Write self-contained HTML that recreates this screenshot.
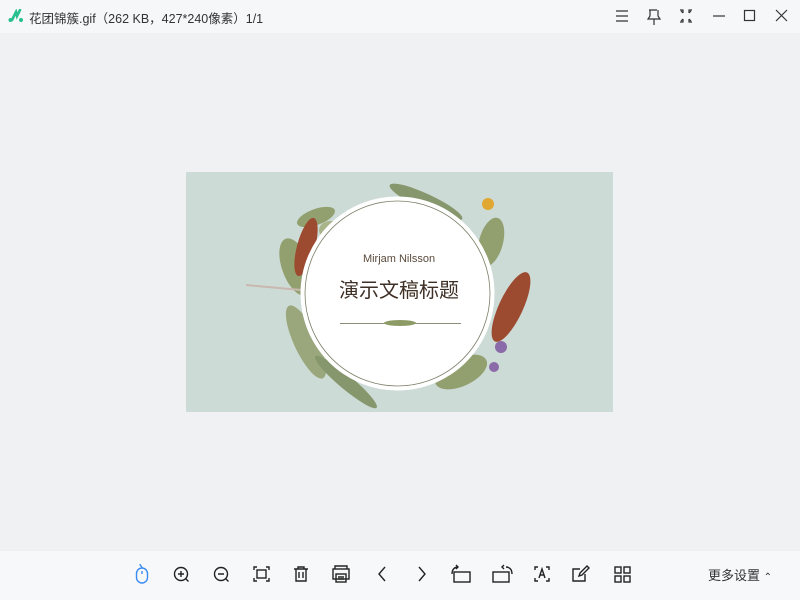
<!DOCTYPE html>
<html><head><meta charset="utf-8"><style>
*{margin:0;padding:0;box-sizing:border-box}
body{width:800px;height:600px;background:#f0f1f3;font-family:"Liberation Sans","Noto Sans CJK SC",sans-serif;position:relative;overflow:hidden}
.top{position:absolute;left:0;top:0;width:800px;height:33px;background:#f6f7f9}
.title{position:absolute;left:29px;top:8px;font-size:12.5px;color:#333}
.bot{position:absolute;left:0;top:550px;width:800px;height:50px;background:#f7f8fa;border-top:1px solid #eceef0}
.more{position:absolute;left:708px;top:565px;font-size:13px;color:#333}
svg{position:absolute}
</style></head><body>
<div class="top"></div>
<svg style="left:8px;top:9px" width="16" height="14" viewBox="0 0 16 14"><circle cx="2.5" cy="11" r="2" fill="#28c08c"/><path d="M4 11 L8 3 L9 7 L12 1" stroke="#28c08c" stroke-width="2.6" fill="none" stroke-linecap="round"/><circle cx="13" cy="11" r="2" fill="#28c08c"/></svg>
<div class="title">花团锦簇.gif（262 KB，427*240像素）1/1</div>
<svg style="left:610px;top:6px" width="190" height="22" viewBox="0 0 190 22" fill="none" stroke="#333" stroke-width="1.2">
<path d="M6 5h12M6 10h12M6 15h12"/>
<path d="M39 4h8M40 4v6l-2 3h12l-2-3V4M44 13v6"/>
<path d="M70 4h3v3M82 4h-3v3M70 16h3v-3M82 16h-3v-3M71 5l2 2M81 5l-2 2M71 15l2-2M81 15l-2-2"/>
<path d="M103 10h12"/>
<rect x="134.5" y="4.5" width="10" height="10"/>
<path d="M166 4l11 11M177 4l-11 11"/>
</svg>
<div style="position:absolute;left:186px;top:172px;width:427px;height:240px;background:#cddbd6;overflow:hidden">
<svg width="427" height="240" viewBox="0 0 427 240">
<g fill="#8c9a66" opacity=".9">
<ellipse cx="110" cy="95" rx="14" ry="30" transform="rotate(-20 110 95)"/>
<ellipse cx="120" cy="170" rx="12" ry="40" transform="rotate(-25 120 170)" fill="#95a173"/>
<ellipse cx="275" cy="200" rx="28" ry="14" transform="rotate(-25 275 200)"/>
<ellipse cx="305" cy="70" rx="12" ry="25" transform="rotate(15 305 70)"/>
<ellipse cx="240" cy="30" rx="40" ry="8" transform="rotate(25 240 30)" fill="#7f8f62"/>
<ellipse cx="160" cy="210" rx="40" ry="7" transform="rotate(40 160 210)" fill="#7f8f62"/>
<ellipse cx="130" cy="45" rx="20" ry="8" transform="rotate(-20 130 45)"/>
<ellipse cx="145" cy="58" rx="12" ry="9" fill="#a6b083"/>
</g>
<ellipse cx="120" cy="75" rx="9" ry="30" transform="rotate(15 120 75)" fill="#9c4a30"/>
<ellipse cx="325" cy="135" rx="12" ry="38" transform="rotate(25 325 135)" fill="#9c4a30"/>
<circle cx="302" cy="32" r="6" fill="#e0a830"/>
<circle cx="315" cy="175" r="6" fill="#8a6aa8"/>
<circle cx="308" cy="195" r="5" fill="#8a6aa8"/>
<path d="M60 113 L115 118" stroke="#c9b8b0" stroke-width="2"/>
<circle cx="211.5" cy="121.5" r="97" fill="#fff"/>
<circle cx="211.5" cy="121.5" r="92.5" fill="none" stroke="#7d7f6a" stroke-width=".8"/>
<path d="M154 151.5H275" stroke="#8c8e7a" stroke-width="1"/>
<ellipse cx="214" cy="151" rx="16" ry="3" fill="#8c9a66"/>
<text x="213" y="90" text-anchor="middle" font-size="11" fill="#5a4a3c" font-family="Liberation Sans,sans-serif">Mirjam Nilsson</text>
<text x="213" y="125" text-anchor="middle" font-size="20" fill="#3e3026" font-family="Noto Sans CJK SC,sans-serif">演示文稿标题</text>
</svg></div>
<div class="bot"></div>
<svg style="left:130px;top:562px" width="520" height="26" viewBox="0 0 520 26" fill="none" stroke="#222" stroke-width="1.4">
<g stroke="#3b8cf0"><rect x="6.5" y="6" width="11" height="15" rx="5.5"/><path d="M12 9v3M12 6c0-2 -2-2 -2-4"/></g>
<circle cx="51" cy="12" r="6.5"/><path d="M55.5 16.5l3 3M48 12h6M51 9v6"/>
<circle cx="91" cy="12" r="6.5"/><path d="M95.5 16.5l3 3M88 12h6"/>
<path d="M124 8V5h3M136 5h3v3M124 16v3h3M136 19h3v-3"/><rect x="127" y="8" width="9" height="8"/>
<path d="M164 7h14M168 7V5h6v2M166 7v12h10V7M169 10v6M173 10v6"/>
<rect x="203" y="7" width="16" height="10"/><rect x="206" y="12" width="10" height="8"/><path d="M205 7V4h12v3M208 15h6M208 17h6"/>
<path d="M255 5l-6 7 6 7"/>
<path d="M289 5l6 7-6 7"/>
<rect x="324" y="10" width="16" height="10"/><path d="M322 12c0-5 3-7 6-7M326 3l2 2-2 2"/>
<rect x="363" y="10" width="16" height="10"/><path d="M382 12c0-5-3-7-6-7M374 3l-2 2 2 2"/>
<path d="M405 8V5h3M416 5h3v3M405 16v3h3M416 19h3v-3M409 16l3-9 3 9M410 13h4"/>
<path d="M455 12v7h-12V7h7M449 14l1-3 7-7 2 2-7 7z"/>
<rect x="485" y="5" width="6" height="6"/><rect x="494" y="5" width="6" height="6"/><rect x="485" y="14" width="6" height="6"/><rect x="494" y="14" width="6" height="6"/>
</svg>
<div class="more">更多设置 <span style="font-size:10px">⌃</span></div>
</body></html>
